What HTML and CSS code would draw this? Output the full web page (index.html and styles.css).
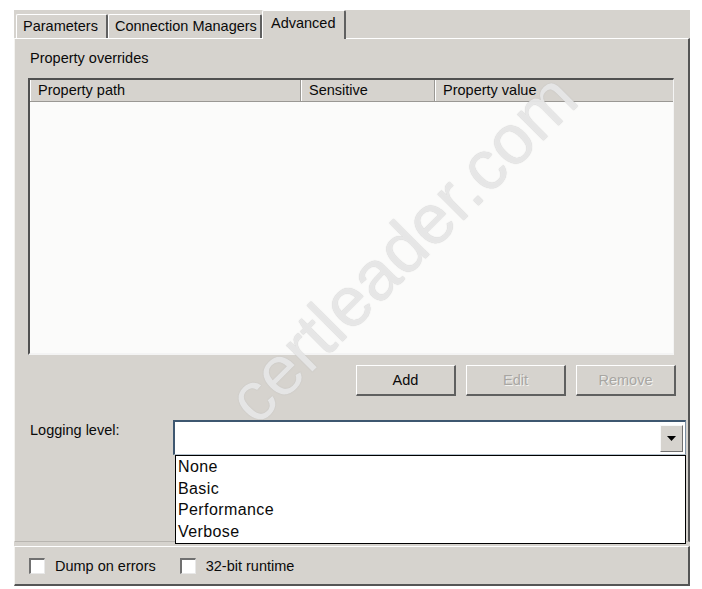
FILE: index.html
```html
<!DOCTYPE html>
<html>
<head>
<meta charset="utf-8">
<title>Advanced</title>
<link rel="stylesheet" href="styles.css">
</head>
<body>
<div class="dialog">
  <div class="tabs">
    <div class="tab tab-params">Parameters</div>
    <div class="tab tab-conn">Connection Managers</div>
    <div class="tab tab-adv active">Advanced</div>
  </div>
  <div class="page">
    <div class="label">Property overrides</div>
    <div class="list">
      <div class="list-head">
        <div class="col col-path">Property path</div>
        <div class="col col-sens">Sensitive</div>
        <div class="col col-val">Property value</div>
      </div>
      <div class="list-body"></div>
    </div>
    <div class="buttons">
      <button class="btn">Add</button>
      <button class="btn" disabled>Edit</button>
      <button class="btn" disabled>Remove</button>
    </div>
    <div class="logging">
      <div class="label logging-label">Logging level:</div>
      <div class="combo">
        <div class="combo-field"></div>
        <div class="combo-arrow">
          <svg width="9" height="5" viewBox="0 0 9 5"><path d="M0 0H9L4.5 5Z" fill="#000"/></svg>
        </div>
        <ul class="combo-list">
          <li>None</li>
          <li>Basic</li>
          <li>Performance</li>
          <li>Verbose</li>
        </ul>
      </div>
    </div>
  </div>
  <div class="options">
    <label class="check"><span class="box"></span>Dump on errors</label>
    <label class="check"><span class="box"></span>32-bit runtime</label>
  </div>
</div>
<div class="watermark">certleader.com</div>
</body>
</html>
```

FILE: styles.css
```css
html, body {
  margin: 0;
  padding: 0;
  background: #ffffff;
}

body {
  position: relative;
  width: 702px;
  height: 589px;
  overflow: hidden;
  font-family: "Liberation Sans", Arial, sans-serif;
  font-size: 14.5px;
  color: #0a0a0a;
}

.dialog {
  margin: 10px 0 0 14px;
  width: 676px;
  background: #d6d3ce;
  display: flex;
  flex-direction: column;
}

/* tab strip */
.tabs {
  display: flex;
  align-items: flex-end;
  height: 28px;
  padding-left: 2px;
}

.tab {
  box-sizing: border-box;
  height: 24px;
  line-height: 22px;
  padding-left: 6px;
  border-top: 1px solid #ffffff;
  border-left: 1px solid #ffffff;
  border-right: 2px solid #606060;
  border-radius: 2px 2px 0 0;
  white-space: nowrap;
}

.tab-params { width: 92px; }
.tab-conn { width: 154px; }
.tab-adv { width: 84px; padding-left: 8px; }

.tab.active {
  height: 29px;
  line-height: 25px;
  margin-bottom: -1px;
  position: relative;
  z-index: 1;
  background: #d6d3ce;
}

/* tab page */
.page {
  box-sizing: border-box;
  height: 504px;
  border-top: 1px solid #ffffff;
  border-left: 1px solid #f4f3f0;
  border-right: 2px solid #555;
  border-bottom: 1px solid #b8b5b0;
  padding: 11px 14px 0 13px;
}

.label {
  line-height: 17px;
  height: 17px;
  padding-left: 2px;
}

.list {
  margin-top: 11px;
  height: 277px;
  box-sizing: border-box;
  border-top: 2px solid #505050;
  border-left: 2px solid #505050;
  border-right: 1px solid #f4f4f4;
  border-bottom: 2px solid #f4f4f4;
  background: #fbfbfa;
  display: flex;
  flex-direction: column;
}

.list-head {
  display: flex;
  height: 21px;
  border-bottom: 1px solid #9a9894;
  background: #d6d3ce;
}

.col {
  box-sizing: border-box;
  line-height: 21px;
  padding-left: 8px;
  border-right: 1px solid #9a9894;
  box-shadow: inset 1px 0 0 #ffffff;
  white-space: nowrap;
}

.col-path { width: 271px; }
.col-sens { width: 134px; }
.col-val { flex: 1; border-right: none; }

.list-body { flex: 1; }

/* buttons */
.buttons {
  display: flex;
  justify-content: flex-end;
  gap: 10px;
  margin-top: 10px;
  margin-right: -2px;
}

.btn {
  box-sizing: border-box;
  width: 100px;
  height: 31px;
  font: inherit;
  color: #0a0a0a;
  background: #d6d3ce;
  border: none;
  border-top: 1px solid #ffffff;
  border-left: 1px solid #ffffff;
  border-right: 2px solid #606060;
  border-bottom: 2px solid #606060;
  padding: 0;
}

.btn:disabled {
  color: #a8a6a2;
  text-shadow: 1px 1px 0 #f2f2f0;
}

/* logging level row */
.logging {
  display: grid;
  grid-template-columns: 145px 1fr;
  align-items: start;
  margin-top: 24px;
  margin-right: -12px;
}

.logging-label {
  margin-top: 2px;
}

.combo {
  position: relative;
  height: 35px;
  box-sizing: border-box;
  border-top: 2px solid #3e5770;
  border-left: 2px solid #3e5770;
  border-right: 1px solid #7d8fa2;
  border-bottom: 1px solid #b7c3ce;
  background: #ffffff;
  display: flex;
  align-items: center;
  justify-content: flex-end;
  padding-right: 2px;
}

.combo-field { flex: 1; }

.combo-arrow {
  box-sizing: border-box;
  width: 23px;
  height: 27px;
  background: #d6d3ce;
  border-top: 1px solid #f8f8f8;
  border-left: 1px solid #f8f8f8;
  border-right: 1px solid #707070;
  border-bottom: 1px solid #707070;
  display: flex;
  align-items: center;
  justify-content: center;
}

.combo-list {
  position: absolute;
  top: 33px;
  left: 0;
  right: -1px;
  height: 89px;
  box-sizing: border-box;
  margin: 0;
  padding: 0 0 0 2px;
  list-style: none;
  background: #ffffff;
  border: 1px solid #000;
  z-index: 2;
  font-size: 16px;
  letter-spacing: 0.4px;
}

.combo-list li {
  line-height: 21.5px;
  height: 21.5px;
}

/* bottom option strip */
.options {
  box-sizing: border-box;
  height: 40px;
  margin-top: 4px;
  border-top: 1px solid #ffffff;
  border-left: 1px solid #f4f3f0;
  border-right: 2px solid #555;
  border-bottom: 2px solid #555;
  display: flex;
  align-items: center;
  padding-left: 14px;
  gap: 24px;
}

.check {
  display: flex;
  align-items: center;
  gap: 10px;
}

.box {
  box-sizing: border-box;
  width: 16px;
  height: 16px;
  background: #ffffff;
  border-top: 2px solid #707070;
  border-left: 2px solid #707070;
  border-right: 1px solid #e8e8e8;
  border-bottom: 1px solid #e8e8e8;
}

/* diagonal site stamp over the dialog */
.watermark {
  position: absolute;
  left: 402px;
  top: 248px;
  transform: translate(-50%, -50%) rotate(-45deg);
  font-family: "Liberation Sans", Arial, sans-serif;
  font-size: 70px;
  color: rgba(234, 234, 234, 0.9);
  text-shadow: 0 0 1px rgba(160, 160, 160, 0.6);
  white-space: nowrap;
  pointer-events: none;
  z-index: 5;
}
```
